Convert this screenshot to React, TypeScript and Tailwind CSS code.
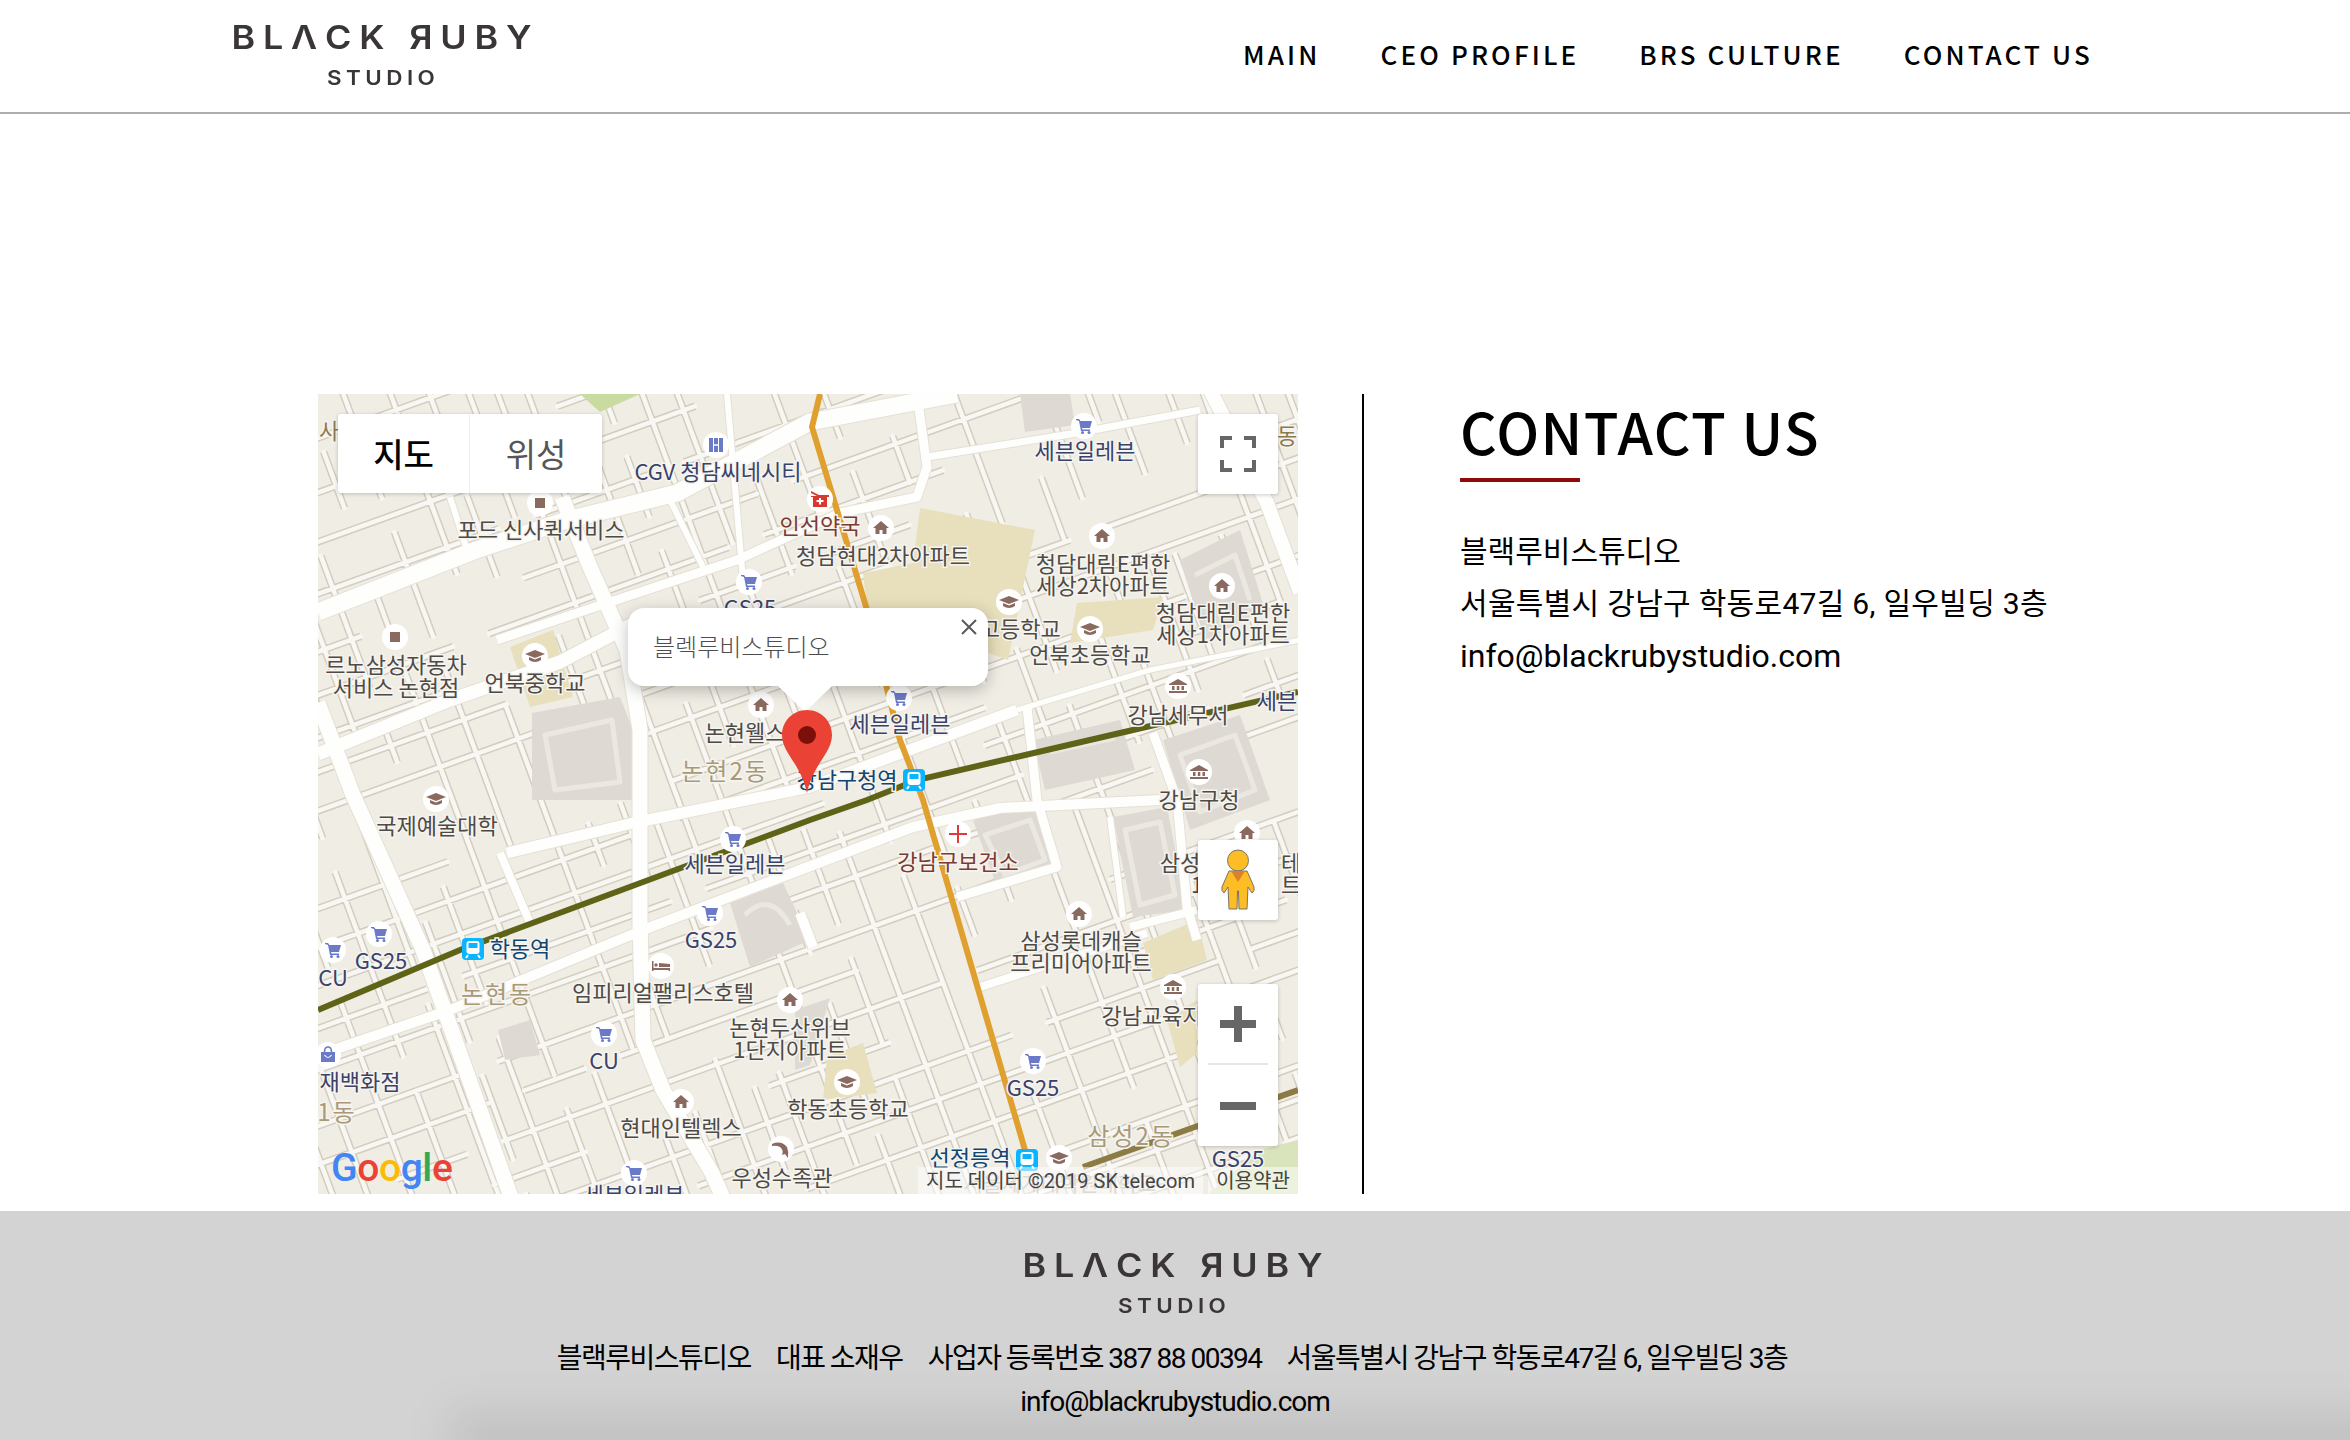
import React from "react";

type Seg = [number, number, number, number];

function minorRoads(): Seg[] {
  let s = 12345;
  const rnd = () => {
    s = (s * 1664525 + 1013904223) % 4294967296;
    return s / 4294967296;
  };
  const segs: Seg[] = [];
  for (let c = 340; c < 1720; c += 30 + rnd() * 28) {
    let x = 300;
    while (x < 1310) {
      const len = 60 + rnd() * 190;
      if (rnd() > 0.15) segs.push([x, c - 0.36 * (x - 318), x + len, c - 0.36 * (x + len - 318)]);
      x += len + (rnd() > 0.5 ? 0 : 36);
    }
  }
  for (let c = -60; c < 1340; c += 27 + rnd() * 30) {
    let y = 380;
    while (y < 1205) {
      const len = 36 + rnd() * 110;
      if (rnd() > 0.22) segs.push([c + 0.37 * (y - 394), y, c + 0.37 * (y + len - 394), y + len]);
      y += len + (rnd() > 0.4 ? 0 : 34);
    }
  }
  return segs;
}

const majors: [string, number][] = [
  ["M318,754 L450,700 L560,662 L640,620", 13],
  ["M318,612 L476,550 L567,520 L677,493 L810,422 L957,394", 17],
  ["M562,497 L590,567 L627,650 L640,730 L640,923 L643,1040 L663,1090 L712,1173 L724,1200", 15],
  ["M318,703 L353,795 L423,950 L512,1200", 15],
  ["M1210,390 L1267,503 L1300,592", 14],
  ["M333,1050 L450,1010 L643,930 L800,870 L913,827 L1000,808 L1160,800", 10],
  ["M507,853 L633,823 L810,787 L1017,710", 11],
  ["M1017,710 L1150,670 L1300,640", 5],
  ["M497,640 L577,613 L737,560 L840,513 L917,497 L927,467 L917,394", 9],
  ["M927,457 L1077,433 L1200,410", 7],
  ["M1027,707 L1037,800 L1057,867 L957,897", 9],
  ["M1153,733 L1177,800 L1187,907 L1197,940", 9],
  ["M1110,817 L1123,917", 6],
  ["M1130,927 L1197,910", 8],
  ["M980,987 L1147,933", 8],
  ["M500,853 L530,923", 8],
  ["M800,913 L813,947", 10],
  ["M450,497 L467,550", 6],
  ["M670,500 L703,567", 6],
  ["M727,394 L743,580", 6],
];

const parks = [
  "920,508 1035,530 1008,660 980,650 867,607 863,573 913,563",
  "1077,603 1163,597 1153,630 1070,643",
  "510,647 553,630 573,697 530,707",
  "1143,943 1197,920 1207,960 1153,980",
  "1167,1020 1197,1000 1197,1053 1180,1067",
  "827,1057 863,1043 877,1093 823,1100",
];

const buildings = [
  "532,713 620,697 633,730 633,800 532,800",
  "973,820 1037,800 1057,867 997,887",
  "1113,817 1167,807 1187,910 1133,917",
  "730,903 783,883 810,940 750,967",
  "1033,740 1120,720 1135,770 1045,790",
  "1163,740 1240,715 1270,800 1190,830",
  "1180,560 1240,530 1265,610 1205,640",
  "498,1030 530,1020 540,1055 505,1060",
  "795,1010 830,998 810,1065 795,1070",
  "1020,394 1070,394 1075,425 1025,432",
];

const lanes = [
  "M545,735 L612,720 L620,782 L555,790 Z",
  "M985,835 L1030,820 L1045,860 L1005,875 Z",
  "M1125,830 L1160,822 L1175,895 L1140,905 Z",
  "M745,915 Q770,890 790,925",
  "M1050,752 L1115,738",
  "M1180,755 L1235,735 L1255,790 L1200,812 Z",
  "M1195,575 L1235,555 L1250,600",
];

const N = "#39426a";
const G = "#4e4a46";
const R = "#7b3a32";
const S = "#0f4571";
const T = "#a8997a";

const labels: [string, number, number, string, number?][] = [
  ["CGV 청담씨네시티", 718, 480, N],
  ["세븐일레븐", 1085, 459, N],
  ["포드 신사퀵서비스", 541, 538, G],
  ["인선약국", 820, 534, R],
  ["청담현대2차아파트", 883, 564, G],
  ["청담대림E편한", 1103, 572, G],
  ["세상2차아파트", 1103, 594, G],
  ["청담대림E편한", 1223, 621, G],
  ["세상1차아파트", 1223, 643, G],
  ["GS25", 750, 616, N],
  ["르노삼성자동차", 396, 673, G],
  ["서비스 논현점", 396, 696, G],
  ["언북중학교", 535, 691, G],
  ["청담고등학교", 1000, 637, G],
  ["언북초등학교", 1090, 663, G],
  ["강남세무서", 1178, 723, G],
  ["세븐", 1277, 709, N],
  ["논현웰스", 745, 741, G],
  ["세븐일레븐", 900, 732, N],
  ["논현2동", 725, 780, T, 24],
  ["강남구청역", 847, 788, S],
  ["강남구청", 1199, 808, G],
  ["국제예술대학", 437, 834, G],
  ["세븐일레븐", 735, 872, N],
  ["강남구보건소", 958, 870, R],
  ["삼성", 1180, 871, G],
  ["테", 1291, 871, G],
  ["트", 1291, 893, G],
  ["1", 1197, 893, G],
  ["GS25", 381, 969, N],
  ["CU", 333, 986, N],
  ["학동역", 520, 957, S],
  ["논현동", 497, 1003, T, 24],
  ["임피리얼팰리스호텔", 663, 1001, G],
  ["GS25", 711, 948, N],
  ["삼성롯데캐슬", 1081, 949, G],
  ["프리미어아파트", 1081, 971, G],
  ["논현두산위브", 790, 1036, G],
  ["1단지아파트", 790, 1058, G],
  ["강남교육지", 1152, 1024, G],
  ["CU", 604, 1069, N],
  ["재백화점", 360, 1090, N],
  ["1동", 337, 1121, T, 24],
  ["현대인텔렉스", 681, 1136, G],
  ["학동초등학교", 848, 1117, G],
  ["GS25", 1033, 1096, N],
  ["삼성2동", 1131, 1145, T, 24],
  ["선정릉역", 970, 1166, S],
  ["GS25", 1238, 1167, N],
  ["우성수족관", 782, 1186, G],
  ["세븐일레븐", 634, 1203, N],
  ["사", 329, 439, "#8b7a50"],
  ["동", 1287, 444, "#8b7a50"],
];

const ICON_BROWN = "#8a6a5e";
const ICON_BLUE = "#6b79c9";

function Cart() {
  return (
    <g fill={ICON_BLUE}>
      <path d="M-8,-7 L-5,-7 L-3.5,-5 L8,-5 L6,2 L-2,2 L-1.5,3.5 L6,3.5 L6,5 L-3,5 L-5,-5 L-8,-6 Z" />
      <circle cx="-1.5" cy="6.5" r="1.5" />
      <circle cx="5" cy="6.5" r="1.5" />
    </g>
  );
}
function Home() {
  return <path fill={ICON_BROWN} d="M0,-7 L8,0 L5.5,0 L5.5,6 L1.5,6 L1.5,2 L-1.5,2 L-1.5,6 L-5.5,6 L-5.5,0 L-8,0 Z" />;
}
function School() {
  return (
    <g fill={ICON_BROWN}>
      <path d="M0,-6 L10,-2 L0,2 L-10,-2 Z" />
      <path d="M-6,1 L0,3.5 L6,1 L6,4 Q0,8 -6,4 Z" />
    </g>
  );
}
function Bank() {
  return (
    <g fill={ICON_BROWN}>
      <path d="M0,-7 L9,-2 L9,-1 L-9,-1 L-9,-2 Z" />
      <rect x="-6" y="0" width="2.5" height="4" />
      <rect x="-1.2" y="0" width="2.5" height="4" />
      <rect x="3.5" y="0" width="2.5" height="4" />
      <rect x="-9" y="5" width="18" height="2" />
    </g>
  );
}
function Square() {
  return <rect x="-5" y="-5" width="10" height="10" fill={ICON_BROWN} />;
}
function Bed() {
  return (
    <g fill={ICON_BROWN}>
      <path d="M-9,-5 L-7.5,-5 L-7.5,2 L9,2 L9,5 L7.5,5 L7.5,4 L-7.5,4 L-7.5,5 L-9,5 Z" />
      <path d="M-2,-3 L9,-2 L9,1 L-2,1 Z" />
      <circle cx="-5" cy="-1" r="1.7" />
    </g>
  );
}
function Pharmacy() {
  return (
    <g>
      <path fill="#d8392f" d="M-9,-8 L-1,-4 L9,-4 L9,-2 L7,-2 L7,8 L-7,8 L-7,-2 L-9,-2 L-9,-3 L-3,-3 L-9,-6 Z" />
      <path fill="#fff" d="M-1,-1 L1,-1 L1,1 L3.5,1 L3.5,3 L1,3 L1,5.5 L-1,5.5 L-1,3 L-3.5,3 L-3.5,1 L-1,1 Z" />
    </g>
  );
}
function Plus() {
  return <path stroke="#e0393a" strokeWidth="2" fill="none" d="M0,-9 L0,9 M-9,0 L9,0" />;
}
function Bag() {
  return (
    <g>
      <path fill="#6b79c9" d="M-7,-3 L7,-3 L7,7 L-7,7 Z" />
      <path fill="none" stroke="#6b79c9" strokeWidth="1.6" d="M-3.5,-3 Q-3.5,-8 0,-8 Q3.5,-8 3.5,-3" />
      <path fill="none" stroke="#fff" strokeWidth="1.2" d="M-3.5,0 Q0,5 3.5,0" />
    </g>
  );
}
function Dolphin() {
  return <path fill={ICON_BROWN} d="M-9,-5 Q0,-9 6,-2 Q8,3 7,9 L4,5 L1,6 Q3,1 -1,-2 Q-5,-4 -9,-3 Z" />;
}
function Film() {
  return (
    <g fill={ICON_BLUE}>
      <rect x="-7" y="-7" width="14" height="14" />
      <path fill="#fff" d="M-3,-7 h1 v14 h-1 Z M2,-7 h1 v14 h-1 Z M-2,-0.7 h4 v1.4 h-4 Z" />
    </g>
  );
}

const pois: [React.ComponentType, [number, number][]][] = [
  [Cart, [[1084, 426], [749, 582], [899, 698], [379, 934], [333, 950], [733, 839], [710, 913], [604, 1034], [1033, 1061], [634, 1173]]],
  [Home, [[881, 528], [1102, 536], [1222, 586], [761, 705], [1079, 914], [790, 1000], [681, 1102], [1247, 833]]],
  [School, [[535, 656], [1009, 602], [1090, 629], [436, 799], [847, 1082], [1059, 1158]]],
  [Bank, [[1178, 686], [1199, 772], [1173, 987]]],
  [Square, [[540, 503], [395, 637]]],
  [Bed, [[661, 966]]],
  [Pharmacy, [[820, 499]]],
  [Plus, [[958, 834]]],
  [Bag, [[328, 1055]]],
  [Dolphin, [[781, 1149]]],
  [Film, [[716, 445]]],
];

function Station({ x, y }: { x: number; y: number }) {
  return (
    <g transform={`translate(${x},${y})`}>
      <rect x="-11" y="-11" width="22" height="22" rx="4" fill="#0bb4ff" />
      <rect x="-6.5" y="-8" width="13" height="13" rx="3" fill="#fff" />
      <rect x="-4.5" y="-6" width="9" height="5" fill="#0bb4ff" />
      <path d="M-5,6 L-7,9 M5,6 L7,9" stroke="#fff" strokeWidth="2" />
    </g>
  );
}

function MapCanvas() {
  const segs = React.useMemo(minorRoads, []);
  const line = (s: Seg) => `M${s[0].toFixed(1)},${s[1].toFixed(1)} L${s[2].toFixed(1)},${s[3].toFixed(1)}`;
  const minorPath = segs.map(line).join(" ");
  return (
    <svg viewBox="318 394 980 800" className="block h-[800px] w-[980px] font-['Noto_Sans_CJK_KR',sans-serif]">
      <rect x="318" y="394" width="980" height="800" fill="#f0ede5" />
      <path d={minorPath} stroke="#d3cdbf" strokeWidth="7.5" fill="none" />
      <path d={minorPath} stroke="#f8f7f3" strokeWidth="4.5" fill="none" strokeLinecap="round" />
      <polygon points="580,394 640,394 600,412" fill="#c9dba0" />
      <polygon points="1260,1150 1298,1140 1298,1194 1208,1194" fill="#d9e4bd" />
      {parks.map((p) => (
        <polygon key={p} points={p} fill="#e8dfbd" />
      ))}
      {buildings.map((p) => (
        <polygon key={p} points={p} fill="#dedad3" />
      ))}
      {lanes.map((d) => (
        <path key={d} d={d} stroke="#ebe8e1" strokeWidth="5" fill="none" strokeLinejoin="round" />
      ))}
      {majors.map(([d, w]) => (
        <path key={d} d={d} stroke="#e4e0d5" strokeWidth={w + 2} fill="none" strokeLinejoin="round" />
      ))}
      {majors.map(([d, w]) => (
        <path key={d + "f"} d={d} stroke="#fefefd" strokeWidth={w} fill="none" strokeLinejoin="round" />
      ))}
      <path d="M318,1010 L460,950 L810,820 L867,800 L917,780 L1133,730 L1298,692" stroke="#5f6317" strokeWidth="6" fill="none" />
      <path d="M820,394 L812,427 L867,610 L900,740 L923,800 L1027,1157" stroke="#e0a030" strokeWidth="6" fill="none" />
      <path d="M1083,1167 L1298,1090" stroke="#8d7b45" strokeWidth="6" fill="none" />
      <text x="1060" y="1191" textAnchor="middle" fontSize="21" fill="#b9b4aa">서울세계대학원대학교</text>
      {labels.map(([t, x, y, c, size], i) => (
        <text
          key={i}
          x={x}
          y={y}
          textAnchor="middle"
          fontSize={size ?? 22}
          fill={c}
          stroke="#f6f4ef"
          strokeWidth="3"
          paintOrder="stroke"
          letterSpacing={size ? 2 : 0}
        >
          {t}
        </text>
      ))}
      {pois.map(([Icon, pts], i) =>
        pts.map(([x, y]) => (
          <g key={`${i}-${x}`} transform={`translate(${x},${y})`}>
            <circle r="13" fill="#fff" />
            <Icon />
          </g>
        )),
      )}
      <Station x={914} y={780} />
      <Station x={473} y={949} />
      <Station x={1027} y={1160} />
    </svg>
  );
}

function Logo({ className }: { className: string }) {
  return (
    <div className={`flex w-[297px] flex-col items-center font-['Inter',sans-serif] font-semibold leading-none text-[#3a3536] ${className}`}>
      <div className="mr-[-7px] whitespace-nowrap text-[32px] leading-[32px] tracking-[7px] [transform:scaleX(1.12)]">BLΛCK ЯUBY</div>
      <div className="mr-[-4px] mt-[14px] text-[20px] leading-[20px] tracking-[4px] [transform:scaleX(1.12)]">STUDIO</div>
    </div>
  );
}

function Pegman() {
  return (
    <svg width="38" height="62" viewBox="0 0 38 62">
      <g fill="#fdbd25" stroke="#7a7268" strokeWidth="1">
        <circle cx="19" cy="11.5" r="10.5" />
        <path d="M10,22 L28,22 L35,38 Q36,42 33,44 L29,38 L28,60 L20,60 L19.5,42 L18.5,42 L18,60 L10,60 L9,38 L5,44 Q2,42 3,38 Z" />
      </g>
      <path d="M12,22 L26,22 L19,33 Z" fill="#d9822b" />
    </svg>
  );
}

const body = "font-['Roboto','Noto_Sans_CJK_KR',sans-serif]";

export default function App() {
  return (
    <div className="relative h-[1440px] overflow-hidden bg-white">
      <header className="flex h-[114px] items-start justify-between border-b-2 border-[#aeaeae] pl-[233px] pr-[257px] pt-[22px]">
        <Logo className="" />
        <nav className="mt-[13px] flex gap-[60px] font-['Noto_Sans_CJK_KR',sans-serif] text-[26px] font-medium leading-[38px] tracking-[3.15px] text-black">
          <a>MAIN</a>
          <a>CEO PROFILE</a>
          <a>BRS CULTURE</a>
          <a>CONTACT US</a>
        </nav>
      </header>

      <main className="flex pb-[17px] pl-[318px] pt-[280px]">
        <div className="relative h-[800px] w-[980px] overflow-hidden">
          <MapCanvas />

          <div className="absolute left-[20px] top-[20px] flex h-[79px] w-[264px] rounded-[3px] bg-white text-[33px] font-['Noto_Sans_CJK_KR',sans-serif] shadow-[0_1px_4px_rgba(0,0,0,0.2)]">
            <div className="flex w-[132px] items-center justify-center border-r border-[#eeeeee] font-medium text-black">지도</div>
            <div className="flex w-[132px] items-center justify-center text-[#565656]">위성</div>
          </div>

          <div className="absolute left-[880px] top-[20px] flex h-[80px] w-[80px] items-center justify-center rounded-[3px] bg-white shadow-[0_1px_4px_rgba(0,0,0,0.2)]">
            <svg width="36" height="36" viewBox="0 0 36 36" fill="none" stroke="#666" strokeWidth="4">
              <path d="M2,12 V2 H12 M24,2 H34 V12 M34,24 V34 H24 M12,34 H2 V24" />
            </svg>
          </div>

          <div className="absolute left-[880px] top-[446px] flex h-[80px] w-[80px] items-center justify-center rounded-[3px] bg-white shadow-[0_1px_4px_rgba(0,0,0,0.2)]">
            <Pegman />
          </div>

          <div className="absolute left-[880px] top-[590px] flex h-[162px] w-[80px] flex-col items-center rounded-[3px] bg-white shadow-[0_1px_4px_rgba(0,0,0,0.2)]">
            <div className="flex h-[81px] w-[60px] items-center justify-center border-b-2 border-[#e6e6e6]">
              <svg width="36" height="36" viewBox="0 0 36 36" fill="#666">
                <path d="M14,0 H22 V14 H36 V22 H22 V36 H14 V22 H0 V14 H14 Z" />
              </svg>
            </div>
            <div className="flex h-[81px] w-[60px] items-center justify-center">
              <div className="h-[8px] w-[36px] bg-[#666]" />
            </div>
          </div>

          <div className="absolute left-[310px] top-[214px] flex h-[78px] w-[360px] items-center rounded-[16px] bg-white pb-[2px] pl-[25px] font-['Noto_Sans_CJK_KR',sans-serif] text-[24px] font-light text-[#4d4d4d] shadow-[0_4px_16px_rgba(0,0,0,0.25)]">
            블렉루비스튜디오
            <svg className="absolute right-[11px] top-[11px]" width="16" height="16" viewBox="0 0 16 16" stroke="#5a5a5a" strokeWidth="2">
              <path d="M1,1 L15,15 M15,1 L1,15" />
            </svg>
          </div>
          <div className="absolute left-[460px] top-[292px] h-0 w-0 border-l-[27px] border-r-[27px] border-t-[26px] border-l-transparent border-r-transparent border-t-white" />

          <svg className="absolute left-[464px] top-[316px]" width="50" height="83" viewBox="0 0 50 83">
            <path d="M25,0 C11,0 0,11 0,25 C0,43 19,54 25,83 C31,54 50,43 50,25 C50,11 39,0 25,0 Z" fill="#ea4335" />
            <circle cx="25" cy="25" r="9" fill="#7c0f0c" />
          </svg>

          <div className="absolute bottom-[3px] left-[13px] font-['Roboto',sans-serif] text-[39px] font-medium leading-[46px] tracking-[-0.4px]">
            <span className="text-[#4285f4]">G</span>
            <span className="text-[#ea4335]">o</span>
            <span className="text-[#fbbc05]">o</span>
            <span className="text-[#4285f4]">g</span>
            <span className="text-[#34a853]">l</span>
            <span className="text-[#ea4335]">e</span>
          </div>

          <div className="absolute bottom-0 left-[600px] flex h-[27px] items-center gap-[5px] font-['Roboto','Noto_Sans_CJK_KR',sans-serif] text-[20px] leading-none text-[#444444]">
            <span className="flex h-full w-[285px] items-center justify-center whitespace-nowrap bg-white/50">지도 데이터 ©2019 SK telecom</span>
            <span className="flex h-full w-[90px] items-center justify-center whitespace-nowrap bg-white/50">이용약관</span>
          </div>
        </div>

        <div className="ml-[64px] h-[800px] w-[2px] bg-black" />

        <section className="pl-[96px]">
          <h1 className="mt-[1px] font-['Noto_Sans_CJK_KR',sans-serif] text-[57px] font-medium leading-[70px] tracking-[1.4px] text-black">CONTACT US</h1>
          <div className="mt-[13px] h-[4px] w-[120px] bg-[#8f0a0a]" />
          <div className={`mt-[44px] text-[30px] leading-[52px] text-black ${body}`}>
            <p>블랙루비스튜디오</p>
            <p className="tracking-[0.3px]">서울특별시 강남구 학동로47길 6, 일우빌딩 3층</p>
            <p className="text-[32px]">info@blackrubystudio.com</p>
          </div>
        </section>
      </main>

      <footer className="relative h-[229px] overflow-hidden bg-[#d3d3d3] pt-[39px]">
        <Logo className="ml-[1024px]" />
        <div className={`relative mt-[21px] text-center text-[28px] leading-[43px] tracking-[-1.5px] text-black ${body}`}>
          <div className="flex justify-center gap-[25px] pr-[6px]">
            <span>블랙루비스튜디오</span>
            <span>대표 소재우</span>
            <span>사업자 등록번호 387 88 00394</span>
            <span>서울특별시 강남구 학동로47길 6, 일우빌딩 3층</span>
          </div>
          <div className="tracking-[-1px]">info@blackrubystudio.com</div>
        </div>
        <div className="absolute bottom-[-26px] left-[450px] right-[-40px] h-[56px] bg-black/[0.08] blur-[20px]" />
      </footer>
    </div>
  );
}
